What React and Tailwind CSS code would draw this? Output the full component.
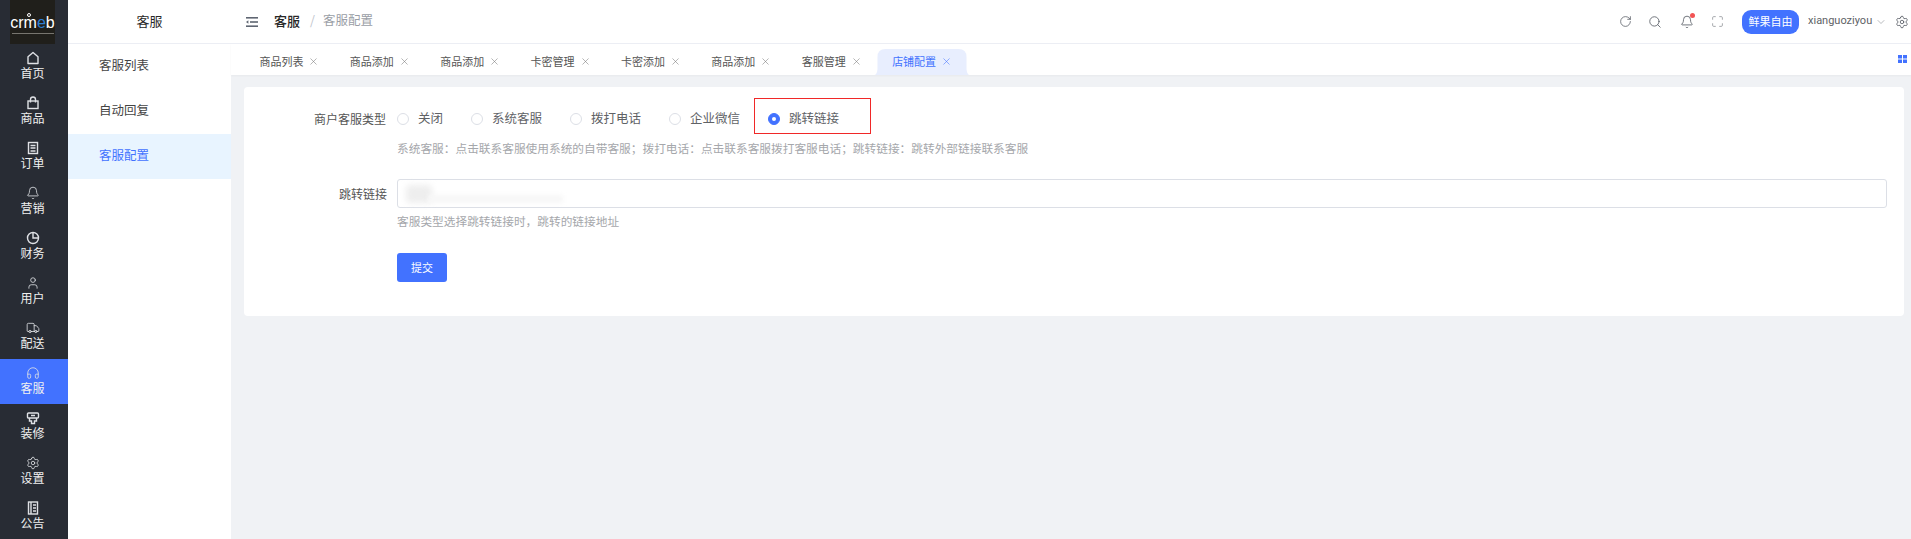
import { Bell, User, Truck, Headphones, Settings, RotateCw, Search, Maximize, ChevronDown, X } from 'lucide-react';

const HomeIcon = (props) => (
  <svg viewBox="0 0 14 14" fill="none" stroke="currentColor" strokeWidth="1.2" strokeLinejoin="round" {...props}>
    <path d="M7 1.5l5 4.2v6.8H2V5.7z" />
  </svg>
);

const BagIcon = (props) => (
  <svg viewBox="0 0 14 14" fill="none" stroke="currentColor" strokeWidth="1.2" {...props}>
    <rect x="2" y="5" width="10" height="7.5" />
    <path d="M4.5 6.5V3.5a2.5 2.5 0 0 1 5 0v3" />
  </svg>
);

const PieIcon = (props) => (
  <svg viewBox="0 0 14 14" fill="none" stroke="currentColor" strokeWidth="1.2" {...props}>
    <circle cx="7" cy="7" r="5.5" />
    <path d="M7 1.5V7h5.5" />
  </svg>
);

const OrderIcon = (props) => (
  <svg viewBox="0 0 14 14" fill="none" stroke="currentColor" strokeWidth="1.2" {...props}>
    <rect x="2.5" y="1.5" width="9" height="11" />
    <path d="M4.5 4.5h5M4.5 7h5M4.5 10h5" />
  </svg>
);

const DecorIcon = (props) => (
  <svg viewBox="0 0 14 14" fill="none" stroke="currentColor" strokeWidth="1" {...props}>
    <path d="M2.5 2h9a1 1 0 0 1 1 1v3a1 1 0 0 1-1 1h-9a1 1 0 0 1-1-1V3a1 1 0 0 1 1-1z" />
    <path d="M3.5 7v3h2v2.5h3V10h2V7M5 4.5h4" />
  </svg>
);

const NoticeIcon = (props) => (
  <svg viewBox="0 0 14 14" fill="none" stroke="currentColor" strokeWidth="1.1" {...props}>
    <rect x="2.5" y="1" width="9" height="12" />
    <path d="M5 1v12M7 4h3M7 7h3M7 10h3" />
  </svg>
);

const FoldIcon = (props) => (
  <svg viewBox="0 0 12 12" fill="currentColor" {...props}>
    <rect x="0" y="1" width="12" height="1.6" />
    <rect x="4" y="5.2" width="8" height="1.6" />
    <rect x="0" y="9.4" width="12" height="1.6" />
    <path d="M0 6l2.4-1.8v3.6z" />
  </svg>
);

const GridIcon = (props) => (
  <svg viewBox="0 0 9 8" fill="currentColor" {...props}>
    <rect x="0" y="0" width="4" height="3.5" />
    <rect x="5" y="0" width="4" height="3.5" />
    <rect x="0" y="4.5" width="4" height="3.5" />
    <rect x="5" y="4.5" width="4" height="3.5" />
  </svg>
);

const navItems = [
  { label: '首页', icon: HomeIcon },
  { label: '商品', icon: BagIcon },
  { label: '订单', icon: OrderIcon },
  { label: '营销', icon: Bell },
  { label: '财务', icon: PieIcon },
  { label: '用户', icon: User },
  { label: '配送', icon: Truck },
  { label: '客服', icon: Headphones, active: true },
  { label: '装修', icon: DecorIcon },
  { label: '设置', icon: Settings },
  { label: '公告', icon: NoticeIcon },
];

const tabs = ['商品列表', '商品添加', '商品添加', '卡密管理', '卡密添加', '商品添加', '客服管理', '店铺配置'];

const radios = ['关闭', '系统客服', '拨打电话', '企业微信', '跳转链接'];

const App = () => {
  return (
    <div className="flex h-[539px] w-full overflow-hidden bg-[#f0f2f5] font-['Noto_Sans_CJK_SC',sans-serif] text-[12.5px]">
      {/* left nav */}
      <div className="w-[68px] shrink-0 bg-[#282c34]">
        <div className="relative ml-[10px] flex h-[44px] w-[45px] flex-col items-center justify-center bg-[#201f1b] text-white">
          <span className="absolute left-[17px] top-[13px] h-[4px] w-[4px] rounded-full border border-white" />
          <div className="mt-[4px] text-[16px] leading-none font-['Liberation_Sans',sans-serif]">
            crm<span className="text-[#2d7fd3]">e</span>b
          </div>
          <div className="mt-[2px] h-px w-[42px] bg-[#77756f]" />
        </div>
        {navItems.map((item) => (
          <div
            key={item.label}
            className={`flex h-[45px] flex-col items-center pt-[7px] text-[#f0f0f0] ${item.active ? 'bg-[#4272ff]' : ''}`}
          >
            <item.icon className="mr-[3px] h-[14px] w-[14px] text-[#dfe1e5]" strokeWidth={1.4} />
            <span className="mr-[3px] text-[12px] leading-[16px]">{item.label}</span>
          </div>
        ))}
      </div>

      {/* sub menu */}
      <div className="w-[163px] shrink-0 bg-white">
        <div className="flex h-[44px] items-center justify-center border-b border-[#eceef4] pb-[2px] text-[13px] text-[#282828]">客服</div>
        <div className="flex h-[45px] items-center pb-[2px] pl-[31px] text-[#444]">客服列表</div>
        <div className="flex h-[45px] items-center pb-[2px] pl-[31px] text-[#444]">自动回复</div>
        <div className="flex h-[45px] items-center bg-[#e8f4ff] pb-[2px] pl-[31px] text-[#4272ff]">客服配置</div>
      </div>

      <div className="min-w-0 flex-1">
        {/* top bar */}
        <div className="flex h-[44px] items-center border-b border-[#eceef4] bg-white pl-[15px] text-[#555a62]">
          <FoldIcon className="h-[12px] w-[12px] text-[#5f6672]" />
          <span className="mb-[2px] ml-[16px] text-[13px] font-medium text-[#282828]">客服</span>
          <span className="mb-[2px] ml-[10px] text-[#c0c4cc]">/</span>
          <span className="mb-[2px] ml-[8px] text-[#9a9ea6]">客服配置</span>

          <div className="ml-auto flex items-center">
            <RotateCw className="h-[13px] w-[13px]" strokeWidth={1.4} />
            <Search className="ml-[16.5px] h-[14px] w-[14px]" strokeWidth={1.4} />
            <div className="relative ml-[18px]">
              <Bell className="h-[14px] w-[14px]" strokeWidth={1.4} />
              <span className="absolute right-[-1px] top-[-2px] h-[5px] w-[5px] rounded-full bg-[#f25454]" />
            </div>
            <Maximize className="ml-[16.5px] h-[13px] w-[13px] text-[#8a8d93]" strokeWidth={1.4} />
            <div className="ml-[18.5px] flex h-[24px] w-[57px] items-center justify-center rounded-[9px] bg-[#4272ff] text-[11px] text-white">鲜果自由</div>
            <span className="ml-[9px] w-[63px] whitespace-nowrap font-['Roboto',sans-serif] text-[11px] text-[#606266]">xianguoziyou</span>
            <ChevronDown className="ml-[4px] h-[12px] w-[12px] text-[#8a8d93]" strokeWidth={1.2} />
            <Settings className="ml-[8px] mr-[2px] h-[14px] w-[14px]" strokeWidth={1.4} />
          </div>
        </div>

        {/* tabs */}
        <div className="flex h-[31px] items-end bg-white pl-[10.4px] shadow-[0_1px_2px_rgba(0,0,0,0.04)]">
          {tabs.map((tab, i) => {
            const active = i === tabs.length - 1;
            return (
              <div
                key={i}
                className={`relative flex h-[26px] w-[90.4px] items-center pb-[2px] pl-[18px] text-[11px] ${active ? 'text-[#4272ff]' : 'text-[#555]'}`}
              >
                {active && (
                  <svg viewBox="0 0 96 26" className="absolute left-0 top-0 h-[26px] w-[96px]" fill="#e8eefe">
                    <path d="M0 26q3 0 3.5-6V8q0-8 8-8h73q8 0 8 8v12q.5 6 3.5 6z" />
                  </svg>
                )}
                <span className="relative">{tab}</span>
                <X className={`relative ml-[5px] h-[11px] w-[11px] ${active ? 'text-[#4272ff]' : 'text-[#777]'}`} strokeWidth={1.2} />
              </div>
            );
          })}
          <GridIcon className="ml-auto mb-[12px] mr-[4px] h-[8px] w-[9px] text-[#4272ff]" />
        </div>

        {/* form card */}
        <div className="ml-[13px] mr-[7px] mt-[12px] h-[229px] rounded-[4px] bg-white pl-[153px] pr-[17px] pt-[22px]">
          <div className="relative flex h-[20px] items-center text-[#606266]">
            <span className="absolute right-[calc(100%+11px)] whitespace-nowrap text-[12px] text-[#555]">商户客服类型</span>
            {radios.map((r, i) => {
              const checked = i === radios.length - 1;
              return (
                <div key={r} className="mb-[1px] mr-[28px] flex items-center">
                  <span className={`mr-[9px] flex h-[12px] w-[12px] items-center justify-center rounded-full border ${checked ? 'border-[#4272ff] bg-[#4272ff]' : 'border-[#dcdfe6]'}`}>
                    {checked && <span className="h-[4px] w-[4px] rounded-full bg-white" />}
                  </span>
                  {r}
                </div>
              );
            })}
            <div className="absolute left-[357px] top-[-11px] h-[36px] w-[117px] border border-[#f02828]" />
          </div>
          <div className="mt-[9px] text-[11.7px] leading-[20px] text-[#a5a7ab]">
            系统客服：点击联系客服使用系统的自带客服；拨打电话：点击联系客服拨打客服电话；跳转链接：跳转外部链接联系客服
          </div>
          <div className="relative mt-[21px] h-[29px] rounded-[3px] border border-[#dcdfe6]">
            <span className="absolute right-[calc(100%+11px)] top-[5px] whitespace-nowrap text-[12px] text-[#555]">跳转链接</span>
            <div className="absolute left-[8px] top-[5px] h-[18px] w-[26px] rounded bg-[#eeeeee] blur-[3px]" />
            <div className="absolute left-[30px] top-[15px] h-[8px] w-[135px] bg-[#f7f7f7] blur-[2px]" />
          </div>
          <div className="mt-[3px] text-[11.7px] leading-[20px] text-[#a5a7ab]">客服类型选择跳转链接时，跳转的链接地址</div>
          <button className="mt-[22px] flex h-[29px] w-[50px] items-center justify-center rounded-[3px] bg-[#4272ff] text-[11px] text-white">提交</button>
        </div>
      </div>
    </div>
  );
};

export default App;
